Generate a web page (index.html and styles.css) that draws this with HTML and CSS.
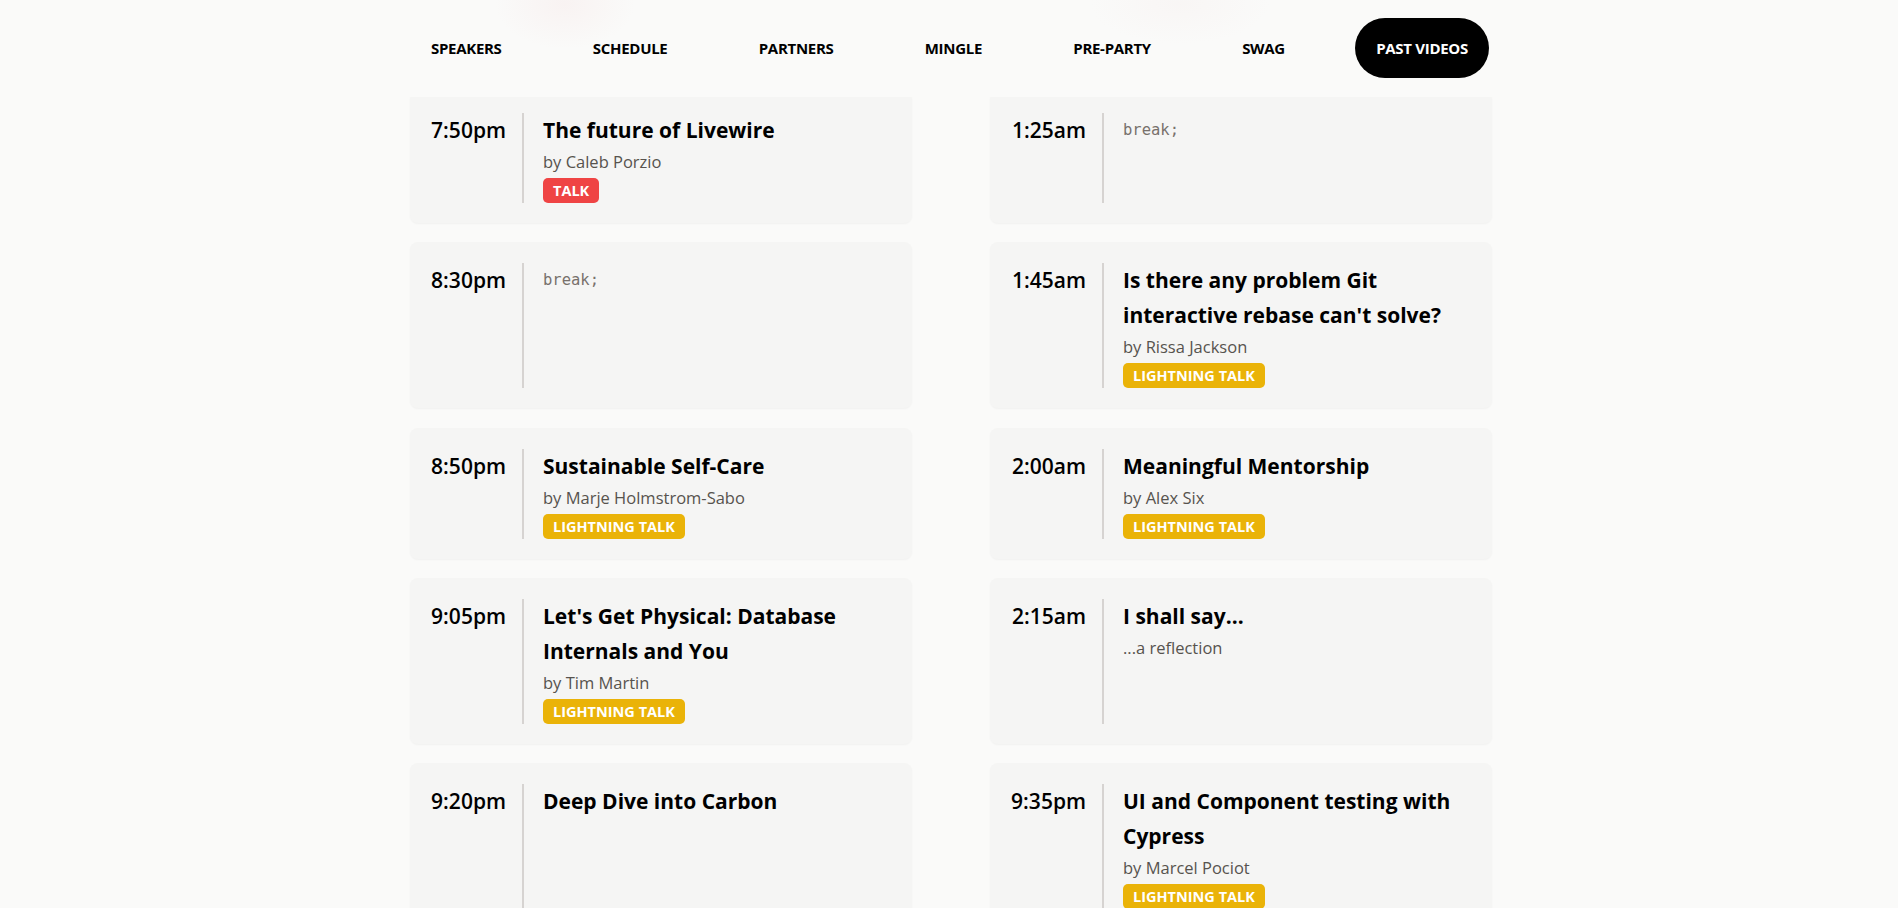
FILE: index.html
```html
<!DOCTYPE html>
<html lang="en">
<head>
<meta charset="utf-8">
<title>Schedule</title>
<link rel="stylesheet" href="styles.css">
</head>
<body>
<header class="site-header">
  <nav class="nav">
    <a class="nav-link" href="#">SPEAKERS</a>
    <a class="nav-link" href="#">SCHEDULE</a>
    <a class="nav-link" href="#">PARTNERS</a>
    <a class="nav-link" href="#">MINGLE</a>
    <a class="nav-link" href="#">PRE-PARTY</a>
    <a class="nav-link" href="#">SWAG</a>
    <a class="nav-link nav-link-active" href="#">PAST VIDEOS</a>
  </nav>
</header>

<main class="schedule">
  <article class="slot">
    <div class="slot-time">7:50pm</div>
    <div class="slot-body">
      <h3 class="slot-title">The future of Livewire</h3>
      <p class="slot-by">by Caleb Porzio</p>
      <span class="badge badge-talk">TALK</span>
    </div>
  </article>
  <article class="slot">
    <div class="slot-time">1:25am</div>
    <div class="slot-body">
      <code class="slot-break">break;</code>
    </div>
  </article>

  <article class="slot">
    <div class="slot-time">8:30pm</div>
    <div class="slot-body">
      <code class="slot-break">break;</code>
    </div>
  </article>
  <article class="slot">
    <div class="slot-time">1:45am</div>
    <div class="slot-body">
      <h3 class="slot-title">Is there any problem Git interactive rebase can't solve?</h3>
      <p class="slot-by">by Rissa Jackson</p>
      <span class="badge badge-lightning">LIGHTNING TALK</span>
    </div>
  </article>

  <article class="slot">
    <div class="slot-time">8:50pm</div>
    <div class="slot-body">
      <h3 class="slot-title">Sustainable Self-Care</h3>
      <p class="slot-by">by Marje Holmstrom-Sabo</p>
      <span class="badge badge-lightning">LIGHTNING TALK</span>
    </div>
  </article>
  <article class="slot">
    <div class="slot-time">2:00am</div>
    <div class="slot-body">
      <h3 class="slot-title">Meaningful Mentorship</h3>
      <p class="slot-by">by Alex Six</p>
      <span class="badge badge-lightning">LIGHTNING TALK</span>
    </div>
  </article>

  <article class="slot">
    <div class="slot-time">9:05pm</div>
    <div class="slot-body">
      <h3 class="slot-title">Let's Get Physical: Database Internals and You</h3>
      <p class="slot-by">by Tim Martin</p>
      <span class="badge badge-lightning">LIGHTNING TALK</span>
    </div>
  </article>
  <article class="slot">
    <div class="slot-time">2:15am</div>
    <div class="slot-body">
      <h3 class="slot-title">I shall say...</h3>
      <p class="slot-by">...a reflection</p>
    </div>
  </article>

  <article class="slot">
    <div class="slot-time">9:20pm</div>
    <div class="slot-body">
      <h3 class="slot-title">Deep Dive into Carbon</h3>
    </div>
  </article>
  <article class="slot">
    <div class="slot-time">9:35pm</div>
    <div class="slot-body">
      <h3 class="slot-title">UI and Component testing with Cypress</h3>
      <p class="slot-by">by Marcel Pociot</p>
      <span class="badge badge-lightning">LIGHTNING TALK</span>
    </div>
  </article>
</main>
</body>
</html>
```

FILE: styles.css
```css
* {
  box-sizing: border-box;
}

html, body {
  margin: 0;
  padding: 0;
}

body {
  background: #fafaf9;
  color: #000;
  font-family: "Open Sans", "Noto Sans", sans-serif;
  overflow: hidden;
}

/* ---------- header / nav ---------- */
.site-header {
  position: relative;
  z-index: 2;
  background:
    radial-gradient(ellipse 70px 45px at 565px 4px, rgba(240, 205, 205, 0.16), rgba(240, 205, 205, 0) 100%),
    radial-gradient(ellipse 90px 40px at 1180px 4px, rgba(238, 215, 215, 0.12), rgba(238, 215, 215, 0) 100%),
    #fafaf9;
  padding: 18px 0 19px;
}

.nav {
  width: 1079px;
  margin-left: calc(50% - 539px);
  display: flex;
  justify-content: space-between;
  align-items: center;
}

.nav-link {
  display: flex;
  align-items: center;
  height: 60px;
  padding: 0 21px;
  border-radius: 9999px;
  color: #000;
  text-decoration: none;
  font-size: 15px;
  font-weight: 700;
  letter-spacing: -0.3px;
}

.nav-link-active {
  background: #000;
  color: #fff;
}

/* ---------- schedule grid ---------- */
.schedule {
  width: 1082px;
  margin: -5px 0 0 calc(50% - 539px);
  display: grid;
  grid-template-columns: 502px 502px;
  column-gap: 78px;
  row-gap: 19.3px;
}

.slot {
  display: flex;
  align-items: stretch;
  background: #f5f5f4;
  border-radius: 8px;
  box-shadow: 0 1px 2px rgba(0, 0, 0, 0.04);
  padding: 21px 20px 20px 20px;
}

.slot-time {
  flex: 0 0 76px;
  text-align: right;
  margin-right: 16px;
  font-size: 21px;
  line-height: 35px;
  font-weight: 600;
  white-space: nowrap;
}

.slot-body {
  flex: 1 1 auto;
  border-left: 2px solid #d6d3d1;
  padding-left: 19px;
}

.slot-title {
  margin: 0;
  font-size: 21px;
  line-height: 35px;
  font-weight: 700;
}

.slot-by {
  margin: 0;
  font-size: 16.5px;
  line-height: 28px;
  color: #57534e;
}

.slot-break {
  display: block;
  font-family: "DejaVu Sans Mono", "Liberation Mono", monospace;
  font-size: 15.5px;
  line-height: 35px;
  color: #78716c;
}

.badge {
  display: inline-block;
  margin-top: 2px;
  height: 25px;
  padding: 0 10px;
  border-radius: 5px;
  color: #fff;
  font-size: 14.5px;
  line-height: 25px;
  font-weight: 700;
  vertical-align: top;
}

.badge-talk {
  background: #ef4444;
}

.badge-lightning {
  background: #eab308;
}
```
